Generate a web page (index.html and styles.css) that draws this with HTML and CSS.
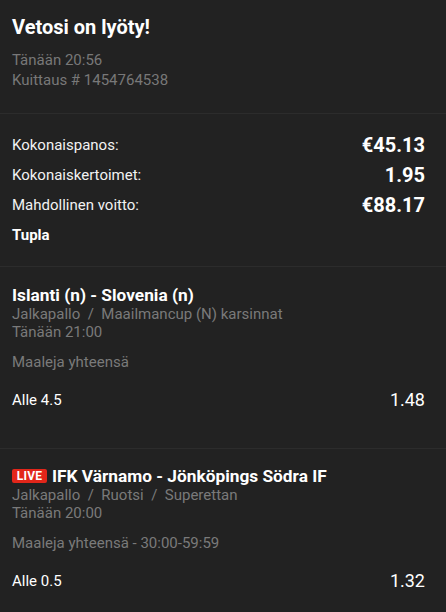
FILE: index.html
```html
<!DOCTYPE html>
<html lang="fi">
<head>
  <meta charset="UTF-8" />
  <title>Vetosi on lyöty</title>
  <link rel="stylesheet" href="styles.css">
</head>
<body>
  <div class="receipt">
    <section class="block header">
      <h1>Vetosi on lyöty!</h1>
      <div class="meta">
        <div>Tänään 20:56</div>
        <div>Kuittaus # 1454764538</div>
      </div>
    </section>

    <section class="block summary">
      <div class="row">
        <span>Kokonaispanos:</span>
        <span class="amount">€45.13</span>
      </div>
      <div class="row">
        <span>Kokonaiskertoimet:</span>
        <span class="amount">1.95</span>
      </div>
      <div class="row">
        <span>Mahdollinen voitto:</span>
        <span class="amount">€88.17</span>
      </div>
      <div class="row type">Tupla</div>
    </section>

    <section class="block event">
      <div class="event-title">Islanti (n) - Slovenia (n)</div>
      <div class="event-info">Jalkapallo &nbsp;/&nbsp; Maailmancup (N) karsinnat</div>
      <div class="event-info">Tänään 21:00</div>
      <div class="market">Maaleja yhteensä</div>
      <div class="pick">
        <span>Alle 4.5</span>
        <span class="odds">1.48</span>
      </div>
    </section>

    <section class="block event live">
      <div class="event-title">
        <span class="badge">LIVE</span>
        <span>IFK Värnamo - Jönköpings Södra IF</span>
      </div>
      <div class="event-info">Jalkapallo &nbsp;/&nbsp; Ruotsi &nbsp;/&nbsp; Superettan</div>
      <div class="event-info">Tänään 20:00</div>
      <div class="market">Maaleja yhteensä - 30:00-59:59</div>
      <div class="pick">
        <span>Alle 0.5</span>
        <span class="odds">1.32</span>
      </div>
    </section>
  </div>
</body>
</html>
```

FILE: styles.css
```css
* {
  box-sizing: border-box;
}

body {
  margin: 0;
  background: #222222;
  color: #ffffff;
  font-family: Roboto, "Liberation Sans", sans-serif;
  font-size: 15px;
}

.receipt {
  width: 446px;
}

.block {
  padding: 0 21px 0 12px;
  border-bottom: 1px solid #2c2c2c;
}

/* Header */
.header {
  padding-top: 15px;
  padding-bottom: 23px;
}

h1 {
  margin: 0 0 11px;
  font-size: 20px;
  line-height: 24px;
  font-weight: 700;
}

.meta {
  color: #787878;
  line-height: 20px;
}

/* Summary */
.summary {
  padding-top: 16px;
  padding-bottom: 16px;
}

.row {
  display: flex;
  justify-content: space-between;
  align-items: center;
  height: 30px;
  line-height: 30px;
  color: #f2f2f2;
}

.amount {
  font-size: 20px;
  font-weight: 700;
  color: #ffffff;
}

.type {
  font-weight: 700;
  color: #ffffff;
}

/* Events */
.event {
  padding-top: 18px;
  padding-bottom: 36px;
}

.event.live {
  padding-top: 16px;
  border-bottom: none;
}

.event-title {
  display: flex;
  align-items: center;
  gap: 5px;
  font-size: 17.3px;
  font-weight: 700;
  line-height: 20px;
}

.live .event-title {
  height: 21px;
}

.badge {
  display: inline-flex;
  align-items: center;
  justify-content: center;
  width: 35px;
  height: 14px;
  border-radius: 2px;
  background: #e2261a;
  font-size: 12px;
  font-weight: 700;
  line-height: 14px;
  letter-spacing: 0.2px;
}

.event-info {
  color: #7a7a7a;
  line-height: 18px;
}

.market {
  margin-top: 12px;
  color: #7a7a7a;
  line-height: 18px;
}

.pick {
  display: flex;
  justify-content: space-between;
  align-items: center;
  margin-top: 17px;
  height: 24px;
  line-height: 24px;
}

.odds {
  font-size: 18px;
}
```
